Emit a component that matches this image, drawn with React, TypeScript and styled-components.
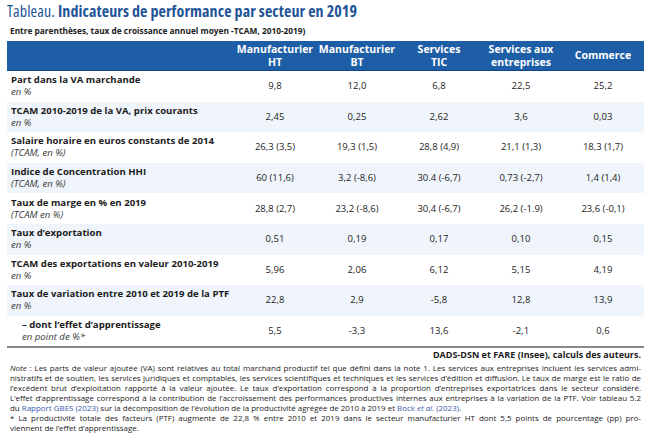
import React from "react";
import styled, { createGlobalStyle } from "styled-components";

const GlobalStyle = createGlobalStyle`
  html, body { margin: 0; padding: 0; background: #ffffff; }
  body { font-family: "Open Sans", "Noto Sans", sans-serif; color: #1c1c1c; }
`;

const Page = styled.div`
  width: 650px;
  height: 436px;
  padding: 0 7px;
  box-sizing: border-box;
  overflow: hidden;
`;

const Title = styled.h1`
  margin: 0;
  padding-top: 1px;
  height: 21px;
  font-size: 16px;
  font-stretch: 78%;
  line-height: 20px;
  font-weight: 700;
  color: #1f5497;
  letter-spacing: 0.1px;
  white-space: nowrap;
`;

const TitleLead = styled.span`
  font-weight: 400;
`;

const Subtitle = styled.div`
  height: 19px;
  padding-left: 3px;
  font-size: 8.3px;
  line-height: 18px;
  font-weight: 700;
  color: #1c1c1c;
  white-space: nowrap;
`;

const Table = styled.div`
  width: 637px;
  border-bottom: 2px solid #8a8a8a;
`;

const Grid = styled.div<{ $alt?: boolean }>`
  display: grid;
  grid-template-columns: 227px repeat(5, 82px);
  align-items: center;
  background: ${(p) => (p.$alt ? "#eff5fb" : "#ffffff")};
`;

const HeadRow = styled(Grid)`
  height: 30px;
  background: #1d5ea7;
  border-bottom: 1px solid #124783;
  box-sizing: border-box;
`;

const HeadCell = styled.div`
  color: #ffffff;
  font-size: 10.5px;
  line-height: 12.5px;
  font-weight: 700;
  text-align: center;
`;

const BodyRow = styled(Grid)`
  height: 30.6px;
`;

const LabelCell = styled.div<{ $indent?: boolean }>`
  padding-left: ${(p) => (p.$indent ? "15px" : "4px")};
  display: flex;
  flex-direction: column;
`;

const Label = styled.span`
  font-size: 9.6px;
  line-height: 12px;
  font-weight: 700;
  color: #1c1c1c;
  white-space: nowrap;
`;

const SubLabel = styled.span`
  font-size: 9.6px;
  line-height: 12px;
  font-style: italic;
  color: #3a3a3a;
  white-space: nowrap;
`;

const ValueCell = styled.div`
  font-size: 9.5px;
  line-height: 12px;
  text-align: center;
  color: #1c1c1c;
  white-space: nowrap;
`;

const Source = styled.div`
  padding: 0 2px 0 0;
  font-size: 9px;
  line-height: 14px;
  font-weight: 700;
  text-align: right;
  color: #1c1c1c;
`;

const Notes = styled.div`
  padding: 1px 2px 0 3px;
  font-size: 7.95px;
  line-height: 10px;
  color: #1c1c1c;
`;

const Line = styled.div<{ $last?: boolean }>`
  text-align: justify;
  text-align-last: ${(p) => (p.$last ? "left" : "justify")};
  white-space: nowrap;
`;

const Link = styled.span`
  color: #3a5bb0;
`;

type RowData = { label: string; sub: string; values: string[]; indent?: boolean };

const columns = [
  ["Manufacturier", "HT"],
  ["Manufacturier", "BT"],
  ["Services", "TIC"],
  ["Services aux", "entreprises"],
  ["Commerce"],
];

const rows: RowData[] = [
  { label: "Part dans la VA marchande", sub: "en %", values: ["9,8", "12,0", "6,8", "22,5", "25,2"] },
  { label: "TCAM 2010-2019 de la VA, prix courants", sub: "en %", values: ["2,45", "0,25", "2,62", "3,6", "0,03"] },
  { label: "Salaire horaire en euros constants de 2014", sub: "(TCAM, en %)", values: ["26,3 (3,5)", "19,3 (1,5)", "28,8 (4,9)", "21,1 (1,3)", "18,3 (1,7)"] },
  { label: "Indice de Concentration HHI", sub: "(TCAM, en %)", values: ["60 (11,6)", "3,2 (-8,6)", "30.4 (-6,7)", "0,73 (-2,7)", "1,4 (1,4)"] },
  { label: "Taux de marge en % en 2019", sub: "(TCAM en %)", values: ["28,8 (2,7)", "23,2 (-8,6)", "30,4 (-6,7)", "26,2 (-1.9)", "23,6 (-0,1)"] },
  { label: "Taux d\u2019exportation", sub: "en %", values: ["0,51", "0,19", "0,17", "0,10", "0,15"] },
  { label: "TCAM des exportations en valeur 2010-2019", sub: "en %", values: ["5,96", "2,06", "6,12", "5,15", "4,19"] },
  { label: "Taux de variation entre 2010 et 2019 de la PTF", sub: "en %", values: ["22,8", "2,9", "-5,8", "12,8", "13,9"] },
  { label: "\u2013 dont l\u2019effet d\u2019apprentissage", sub: "en point de %*", values: ["5,5", "-3,3", "13,6", "-2,1", "0,6"], indent: true },
];

export default function App() {
  return (
    <Page>
      <GlobalStyle />
      <Title>
        <TitleLead>Tableau. </TitleLead>Indicateurs de performance par secteur en 2019
      </Title>
      <Subtitle>Entre parenthèses, taux de croissance annuel moyen -TCAM, 2010-2019)</Subtitle>
      <Table>
        <HeadRow>
          <div />
          {columns.map((c, i) => (
            <HeadCell key={i}>
              {c.map((l, j) => (
                <div key={j}>{l}</div>
              ))}
            </HeadCell>
          ))}
        </HeadRow>
        {rows.map((r, i) => (
          <BodyRow key={i} $alt={i % 2 === 1}>
            <LabelCell $indent={r.indent}>
              <Label>{r.label}</Label>
              <SubLabel>{r.sub}</SubLabel>
            </LabelCell>
            {r.values.map((v, j) => (
              <ValueCell key={j}>{v}</ValueCell>
            ))}
          </BodyRow>
        ))}
      </Table>
      <Source>DADS-DSN et FARE (Insee), calculs des auteurs.</Source>
      <Notes>
        <Line>
          <i>Note</i> : Les parts de valeur ajoutée (VA) sont relatives au total marchand productif tel que défini dans la note 1. Les services aux entreprises incluent les services admi-
        </Line>
        <Line>
          nistratifs et de soutien, les services juridiques et comptables, les services scientifiques et techniques et les services d’édition et diffusion. Le taux de marge est le ratio de
        </Line>
        <Line>
          l’excédent brut d’exploitation rapporté à la valeur ajoutée. Le taux d’exportation correspond à la proportion d’entreprises exportatrices dans le secteur considéré.
        </Line>
        <Line>
          L’effet d’apprentissage correspond à la contribution de l’accroissement des performances productives internes aux entreprises à la variation de la PTF. Voir tableau 5.2
        </Line>
        <Line $last>
          du <Link>Rapport GBES (2023)</Link> sur la décomposition de l’évolution de la productivité agrégée de 2010 à 2019 et{" "}
          <Link>
            Bock <i>et al.</i> (2023)
          </Link>
          .
        </Line>
        <Line>
          * La productivité totale des facteurs (PTF) augmente de 22,8 % entre 2010 et 2019 dans le secteur manufacturier HT dont 5,5 points de pourcentage (pp) pro-
        </Line>
        <Line $last>viennent de l’effet d’apprentissage.</Line>
      </Notes>
    </Page>
  );
}
